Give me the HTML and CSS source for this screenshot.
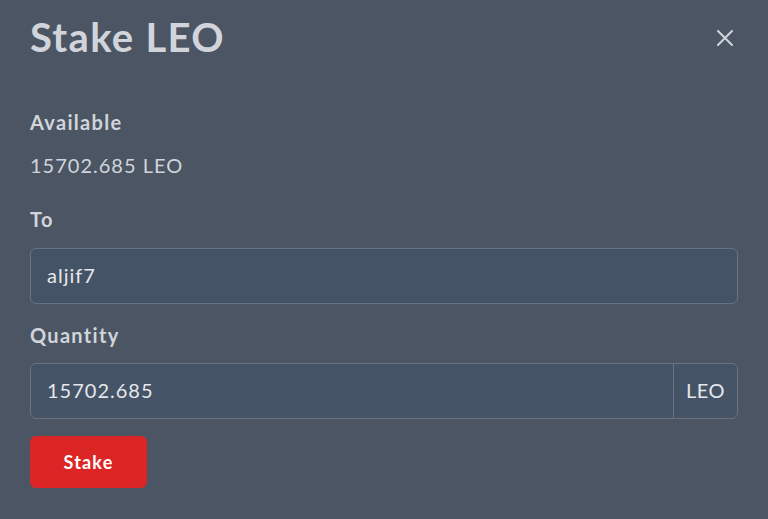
FILE: index.html
```html
<!DOCTYPE html>
<html>
<head lang="en">
    <meta charset="UTF-8">
    <title>Stake LEO</title>
    <link rel="stylesheet" href="styles.css">
</head>
<body>
<div class="modal">
    <div class="modal-head">
        <h1 class="title">Stake LEO</h1>
        <div class="close">
            <svg width="16" height="16" viewBox="0 0 16 16"><path d="M1 1L15 15M15 1L1 15" stroke="#d1d5db" stroke-width="2" stroke-linecap="round"/></svg>
        </div>
    </div>
    <div class="field first">
        <div class="label">Available</div>
        <div class="value">15702.685 LEO</div>
    </div>
    <div class="field to">
        <div class="label">To</div>
        <div class="input">aljif7</div>
    </div>
    <div class="field qty">
        <div class="label">Quantity</div>
        <div class="input group">
            <span class="group-text">15702.685</span>
            <span class="addon">LEO</span>
        </div>
    </div>
    <div class="btn">Stake</div>
</div>
</body>
</html>
```
FILE: styles.css
```css
*{
    margin: 0;
    padding: 0;
    box-sizing: border-box;
}
body{
    background-color: #4b5563;
    font-family: "Lato", "Noto Sans", sans-serif;
    color: #d1d5db;
}
.modal{
    padding: 12px 30px 0 30px;
}
.modal-head{
    display: flex;
    justify-content: space-between;
    align-items: center;
    height: 50px;
}
.title{
    font-size: 40px;
    line-height: 50px;
    font-weight: 700;
    letter-spacing: 1.3px;
}
.close{
    width: 16px;
    height: 16px;
    margin-right: 5px;
    margin-top: 2px;
}
.first{
    margin-top: 46px;
}
.to{
    margin-top: 26px;
}
.qty{
    margin-top: 17px;
}
.label{
    font-size: 20px;
    font-weight: 700;
    line-height: 28px;
    letter-spacing: 1.3px;
}
.value{
    font-size: 20px;
    line-height: 28px;
    margin-top: 15px;
    letter-spacing: 1px;
}
.input{
    margin-top: 15px;
    height: 56px;
    border: 1px solid #6b7280;
    border-radius: 6px;
    background-color: #455366;
    font-size: 20px;
    line-height: 52px;
    padding-left: 16px;
    color: #e5e7eb;
    letter-spacing: 1px;
}
.qty .input{
    margin-top: 14px;
}
.group{
    display: flex;
    padding-left: 0;
}
.group-text{
    flex: 1;
    padding-left: 16px;
}
.addon{
    width: 64px;
    border-left: 1px solid #6b7280;
    text-align: center;
    letter-spacing: 0.5px;
}
.btn{
    margin-top: 17px;
    width: 117px;
    height: 52px;
    line-height: 52px;
    text-align: center;
    background-color: #dc2626;
    color: #fff;
    font-size: 18px;
    font-weight: 700;
    letter-spacing: 1.2px;
    border-radius: 6px;
}
```
